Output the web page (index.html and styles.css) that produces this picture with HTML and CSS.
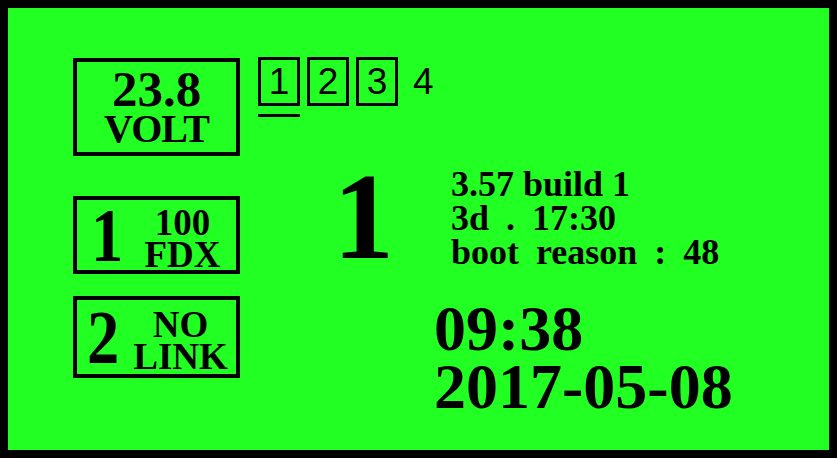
FILE: index.html
```html
<!DOCTYPE html>
<html>
<head>
<meta charset="utf-8">
<link rel="stylesheet" href="styles.css">
</head>
<body>
<div class="screen">
  <div class="left">
    <div class="box volt">
      <div class="volt-num">23.8</div>
      <div class="volt-unit">VOLT</div>
    </div>
    <div class="box port port1">
      <div class="port-num">1</div>
      <div class="port-info">
        <div class="pi-a">100</div>
        <div class="pi-b">FDX</div>
      </div>
    </div>
    <div class="box port port2">
      <div class="port-num">2</div>
      <div class="port-info">
        <div class="pi-a">NO</div>
        <div class="pi-b">LINK</div>
      </div>
    </div>
  </div>
  <div class="right">
    <div class="tabs">
      <div class="tab active"><span class="tab-box">1</span></div>
      <div class="tab"><span class="tab-box">2</span></div>
      <div class="tab"><span class="tab-box">3</span></div>
      <div class="tab plain"><span class="tab-plain">4</span></div>
    </div>
    <div class="status">
      <div class="big-num">1</div>
      <div class="info">
        <div>3.57 build 1</div>
        <div class="wide">3d . 17:30</div>
        <div class="wide">boot reason : 48</div>
      </div>
    </div>
    <div class="clock">
      <div class="time">09:38</div>
      <div class="date">2017-05-08</div>
    </div>
  </div>
</div>
</body>
</html>
```

FILE: styles.css
```css
html, body {
  margin: 0;
  padding: 0;
  background: #000;
}

.screen {
  box-sizing: border-box;
  width: 837px;
  height: 458px;
  border: 8px solid #000;
  background: #22ff22;
  color: #000;
  font-family: "Liberation Serif", "Times New Roman", serif;
  font-weight: bold;
  display: flex;
  padding: 50px 0 0 65px;
  gap: 18px;
  overflow: hidden;
}

.left {
  width: 167px;
  display: flex;
  flex-direction: column;
}

.box {
  box-sizing: border-box;
  border: 4px solid #000;
}

.volt {
  height: 98px;
  display: flex;
  flex-direction: column;
  align-items: center;
  padding-top: 5px;
}

.volt-num {
  font-size: 51px;
  line-height: 44px;
}

.volt-unit {
  font-size: 40px;
  line-height: 36px;
  letter-spacing: -1px;
}

.port {
  display: flex;
  align-items: center;
}

.port1 {
  margin-top: 40px;
  height: 78px;
  padding-left: 14px;
}

.port2 {
  margin-top: 22px;
  height: 82px;
  padding-left: 10px;
}

.port-num {
  font-size: 76px;
  line-height: 70px;
  transform: scaleX(0.85);
  transform-origin: left center;
}

.port-info {
  flex: 1;
  display: flex;
  flex-direction: column;
  align-items: center;
  padding-top: 8px;
}

.pi-a, .pi-b {
  font-size: 37px;
  line-height: 32px;
}

.right {
  flex: 1;
  display: flex;
  flex-direction: column;
}

.tabs {
  display: flex;
  align-items: flex-start;
  gap: 7px;
  margin-top: -1px;
  font-family: "Liberation Sans", Arial, sans-serif;
  font-weight: normal;
}

.tab {
  display: flex;
  flex-direction: column;
  padding-bottom: 12px;
}

.tab.active {
  border-bottom: 3px solid #000;
  padding-bottom: 8px;
}

.tab-box {
  box-sizing: border-box;
  width: 42px;
  height: 49px;
  border: 3px solid #000;
  display: flex;
  align-items: center;
  justify-content: center;
  font-size: 37px;
  line-height: 1;
}

.tab-plain {
  height: 49px;
  display: flex;
  align-items: center;
  padding-left: 8px;
  font-size: 37px;
  line-height: 1;
}

.status {
  display: flex;
  align-items: flex-start;
  margin-top: 49px;
}

.big-num {
  font-size: 122px;
  line-height: 100px;
  margin-left: 75px;
}

.info {
  margin-left: 57px;
  font-size: 36px;
  line-height: 34px;
}

.info .wide {
  word-spacing: 8px;
}

.clock {
  margin-top: 31px;
  margin-left: 176px;
  font-size: 64px;
  line-height: 58px;
}
```
